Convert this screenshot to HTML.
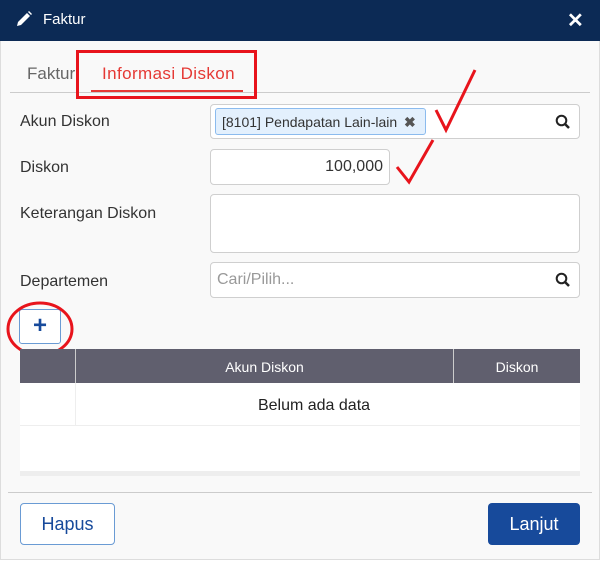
<!DOCTYPE html>
<html><head><style>
*{box-sizing:border-box;margin:0;padding:0}
body{width:600px;height:565px;background:#fff;font-family:"Liberation Sans",sans-serif;position:relative;overflow:hidden}
.a{position:absolute}
.inp{position:absolute;background:#fff;border:1px solid #cfcfcf;border-radius:4px}
.lbl{position:absolute;left:20px;font-size:16px;color:#333}
.mag{position:absolute;right:8px;top:9px}
</style></head><body>
<div class="a" style="left:0;top:0;width:600px;height:560px;background:#f9f9f9;border:1px solid #ddd"></div>
<div class="a" style="left:0;top:0;width:600px;height:41px;background:#0c2a55"></div>
<svg class="a" style="left:15px;top:10px" width="18" height="18" viewBox="0 0 18 18"><path d="M2 16 L3 12 L12 3 L15 6 L6 15 Z" fill="#fff"/><path d="M13 2 L14 1 L17 4 L16 5 Z" fill="#fff"/></svg>
<div class="a" style="left:43px;top:11px;color:#fff;font-size:15px">Faktur</div>
<div class="a" style="left:567px;top:8px;color:#fff;font-size:20px;font-weight:bold">✕</div>
<div class="a" style="left:27px;top:64px;font-size:17px;color:#666">Faktur</div>
<div class="a" style="left:102px;top:64px;font-size:17px;color:#e53935;letter-spacing:0.4px">Informasi Diskon</div>
<div class="a" style="left:91px;top:90px;width:152px;height:2px;background:#e53935"></div>
<div class="a" style="left:10px;top:92px;width:580px;height:1px;background:#ccc"></div>
<div class="a" style="left:76px;top:50px;width:181px;height:49px;border:3px solid #e8141c"></div>
<div class="lbl" style="top:113px">Akun Diskon</div>
<div class="inp" style="left:210px;top:104px;width:370px;height:35px"><svg class="mag" width="16" height="16" viewBox="0 0 16 16"><circle cx="6.5" cy="6.5" r="4.8" stroke="#222" stroke-width="2" fill="none"/><path d="M10 10 L14 14" stroke="#222" stroke-width="2.5"/></svg></div>
<div class="a" style="left:215px;top:108px;width:211px;height:27px;background:#e3f0fd;border:1px solid #8bbbee;border-radius:3px;font-size:14px;color:#333;padding:5px 0 0 6px">[8101] Pendapatan Lain-lain <b style="color:#555;margin-left:3px">✖</b></div>
<div class="lbl" style="top:159px">Diskon</div>
<div class="inp" style="left:210px;top:149px;width:180px;height:36px;text-align:right;padding:8px 6px 0 0;font-size:16px;color:#333">100,000</div>
<div class="lbl" style="top:205px">Keterangan Diskon</div>
<div class="inp" style="left:210px;top:194px;width:370px;height:59px"></div>
<div class="lbl" style="top:273px">Departemen</div>
<div class="inp" style="left:210px;top:262px;width:370px;height:36px;padding:8px 0 0 6px;font-size:16px;color:#999">Cari/Pilih...<svg class="mag" width="16" height="16" viewBox="0 0 16 16"><circle cx="6.5" cy="6.5" r="4.8" stroke="#222" stroke-width="2" fill="none"/><path d="M10 10 L14 14" stroke="#222" stroke-width="2.5"/></svg></div>
<div class="a" style="left:19px;top:309px;width:42px;height:35px;background:#fff;border:1px solid #6a9bd4;border-radius:3px;color:#174a9b;font-size:24px;font-weight:bold;text-align:center;line-height:32px">+</div>
<svg class="a" style="left:0;top:0" width="600" height="565"><ellipse cx="40" cy="329" rx="32" ry="26" stroke="#e8141c" stroke-width="3" fill="none"/><path d="M436 110 L446 130 L475 70" stroke="#e8141c" stroke-width="3" fill="none"/><path d="M397 167 L409 182 L433 140" stroke="#e8141c" stroke-width="3" fill="none"/></svg>
<div class="a" style="left:20px;top:349px;width:560px;height:34px;background:#605f6e"></div>
<div class="a" style="left:75px;top:349px;width:1px;height:34px;background:#ccc"></div>
<div class="a" style="left:453px;top:349px;width:1px;height:34px;background:#ccc"></div>
<div class="a" style="left:76px;top:359px;width:377px;text-align:center;color:#fff;font-size:14px">Akun Diskon</div>
<div class="a" style="left:454px;top:359px;width:126px;text-align:center;color:#fff;font-size:14px">Diskon</div>
<div class="a" style="left:20px;top:383px;width:560px;height:89px;background:#fff"></div>
<div class="a" style="left:75px;top:383px;width:1px;height:42px;background:#eee"></div>
<div class="a" style="left:20px;top:425px;width:560px;height:1px;background:#eee"></div>
<div class="a" style="top:397px;text-align:center;font-size:16px;color:#222;left:164px;width:300px">Belum ada data</div>
<div class="a" style="left:20px;top:471px;width:560px;height:5px;background:#eee"></div>
<div class="a" style="left:8px;top:492px;width:584px;height:1px;background:#ccc"></div>
<div class="a" style="left:20px;top:503px;width:95px;height:42px;background:#fff;border:1px solid #6a9bd4;border-radius:4px;color:#174a9b;font-size:18px;text-align:center;line-height:40px">Hapus</div>
<div class="a" style="left:488px;top:503px;width:92px;height:42px;background:#174a9b;border-radius:4px;color:#fff;font-size:18px;text-align:center;line-height:42px">Lanjut</div>
</body></html>
